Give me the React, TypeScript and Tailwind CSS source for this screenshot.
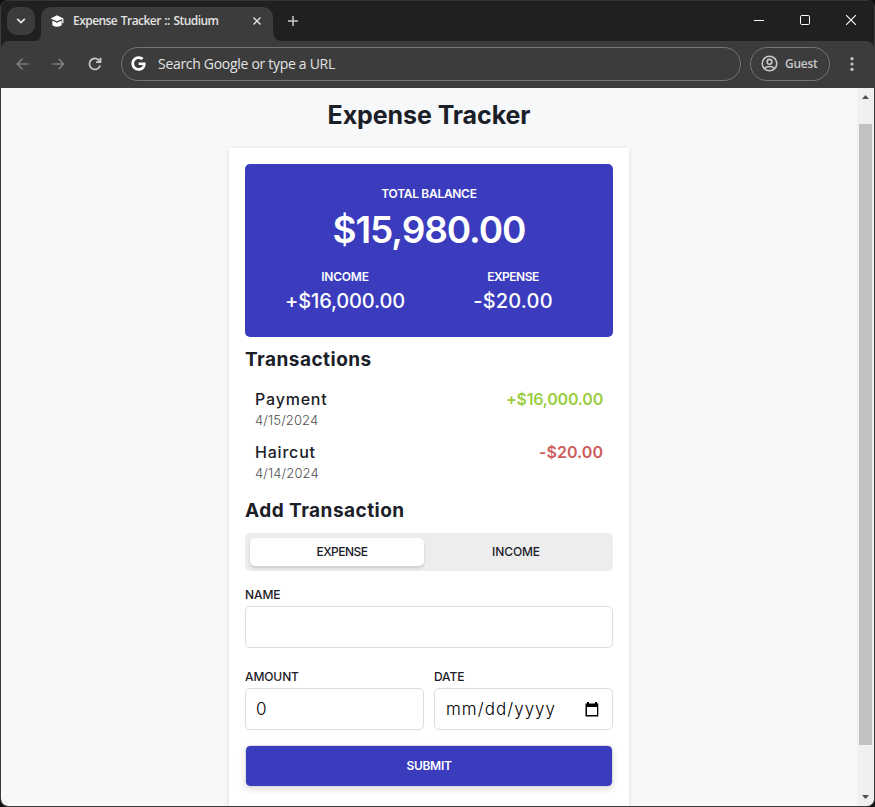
import type { ReactNode } from "react";
import { FaGoogle } from "react-icons/fa";

function TitleBar() {
  return (
    <div className="flex h-[41px] shrink-0 items-start border-t border-[#343635] bg-[#1f2120] pt-[6px]">
      <div className="ml-[6px] flex h-7 w-7 items-center justify-center rounded-[10px] bg-[#3c3c3c]">
        <svg width="10" height="8" viewBox="0 0 10 8" fill="none" stroke="#e3e3e3" strokeWidth="1.8">
          <path d="M1.2 1.8 5 5.6 8.8 1.8" />
        </svg>
      </div>
      <svg className="mt-[24px] shrink-0" width="6" height="10" viewBox="0 0 6 10">
        <path d="M0 10Q6 10 6 2V10Z" fill="#3c3c3c" />
      </svg>
      <div className="flex h-[34px] w-[232px] items-center rounded-t-[10px] bg-[#3c3c3c] pb-[6px]">
        <svg className="ml-[9px]" width="14" height="14" viewBox="0 0 24 24" fill="#fff">
          <path d="M12 2 1 7.500 12 12.500l9-4V16h2V7.500Z" />
          <path d="M4 11v7.500c0 1.500 3.500 3.500 8 3.500s8-2 8-3.500V11l-8 4Z" />
        </svg>
        <span className="ml-[9px] text-[12px] font-semibold tracking-[-0.55px] [word-spacing:1px] whitespace-nowrap text-[#e3e3e3]">
          Expense Tracker :: Studium
        </span>
        <svg className="mr-[12px] ml-auto" width="8" height="8" viewBox="0 0 8 8" stroke="#e3e3e3" strokeWidth="1.4">
          <path d="M.5.5 7.500 7.500M7.500.5.5 7.500" />
        </svg>
      </div>
      <svg className="mt-[24px] shrink-0" width="10" height="10" viewBox="0 0 10 10">
        <path d="M0 0Q0 10 10 10H0Z" fill="#3c3c3c" />
      </svg>
      <svg className="mt-[9px] ml-[5px]" width="10" height="10" viewBox="0 0 10 10" stroke="#c7c7c7" strokeWidth="1.5">
        <path d="M5 0V10M0 5H10" />
      </svg>
      <div className="mr-[18px] ml-auto flex h-[26px] items-center gap-9">
        <svg width="10" height="10" viewBox="0 0 10 10" stroke="#fff">
          <path d="M0 5.500H10" />
        </svg>
        <svg width="10" height="10" viewBox="0 0 10 10" stroke="#fff" fill="none">
          <rect x=".5" y=".5" width="9" height="9" rx="1.200" />
        </svg>
        <svg width="10" height="10" viewBox="0 0 10 10" stroke="#fff" strokeWidth="1.1">
          <path d="M0 0 10 10M10 0 0 10" />
        </svg>
      </div>
    </div>
  );
}

function Toolbar() {
  return (
    <div className="shrink-0 bg-[#1f2120]">
      <div className="flex h-[47px] items-center rounded-t-[8px] bg-[#3c3c3c] pb-[2px]">
        <svg className="ml-[15px]" width="13" height="12" viewBox="0 0 13 12" fill="none" stroke="#7c7c7c" strokeWidth="1.600">
          <path d="M12.500 6H1.500M6.500.8 1.300 6l5.200 5.200" />
        </svg>
        <svg className="ml-[23px]" width="13" height="12" viewBox="0 0 13 12" fill="none" stroke="#7c7c7c" strokeWidth="1.600">
          <path d="M.5 6h11M6.500.8 11.700 6l-5.200 5.200" />
        </svg>
        <svg className="ml-[22px]" width="16" height="16" viewBox="0 0 16 16" fill="none" stroke="#c7c7c7" strokeWidth="1.800">
          <path d="M13.200 9.500A5.500 5.500 0 1 1 12.300 4.600L13.400 6" />
          <path d="M13.500 1.800V6.200H9" />
        </svg>
        <div className="ml-[18px] flex h-[34px] w-[620px] items-center rounded-full border border-[#757575]">
          <FaGoogle className="ml-[9px] text-white" size={15} />
          <span className="ml-[12px] text-[14px] tracking-[-0.3px] whitespace-nowrap text-[#e3e3e3]">
            Search Google or type a URL
          </span>
        </div>
        <div className="ml-[9px] flex h-[34px] w-[80px] items-center rounded-full border border-[#757575]">
          <svg className="ml-[10px]" width="17" height="17" viewBox="0 0 17 17" fill="none" stroke="#c7c7c7" strokeWidth="1.600">
            <circle cx="8.500" cy="8.500" r="7.300" />
            <circle cx="8.500" cy="6.800" r="2.400" />
            <path d="M3.500 13.500C5.500 10.900 11.500 10.900 13.500 13.500" />
          </svg>
          <span className="ml-[7px] text-[12px] font-semibold tracking-[-0.25px] text-[#c7c7c7]">Guest</span>
        </div>
        <svg className="ml-[20px]" width="4" height="14" viewBox="0 0 4 14" fill="#c7c7c7">
          <circle cx="2" cy="1.700" r="1.600" />
          <circle cx="2" cy="7" r="1.600" />
          <circle cx="2" cy="12.300" r="1.600" />
        </svg>
      </div>
    </div>
  );
}

function ScrollBar() {
  return (
    <div className="flex w-[17px] shrink-0 flex-col items-center bg-[#f0f0f0]">
      <svg className="mt-[7px] shrink-0" width="7" height="4" viewBox="0 0 7 4" fill="#505050">
        <path d="M0 4 3.500 0 7 4Z" />
      </svg>
      <div className="mt-[25px] h-[621px] w-[13px] shrink-0 bg-[#c1c1c1]" />
      <svg className="mt-auto mb-[7px] shrink-0" width="7" height="4" viewBox="0 0 7 4" fill="#505050">
        <path d="M0 0 3.500 4 7 0Z" />
      </svg>
    </div>
  );
}

function BalanceCard() {
  return (
    <div className="flex h-[173px] flex-col items-center rounded-[5px] bg-[#3a3cbd] px-4 pt-5 text-white">
      <div className="text-[12px] leading-[20px] font-semibold tracking-[-0.3px]">TOTAL BALANCE</div>
      <div className="text-[37px] leading-[52px] font-semibold tracking-[-1.1px]">$15,980.00</div>
      <div className="mt-[11px] grid w-full grid-cols-2 text-center">
        <div>
          <div className="text-[12px] leading-[20px] font-semibold tracking-[-0.2px]">INCOME</div>
          <div className="text-[20px] leading-[28px] font-medium tracking-[-0.15px]">+$16,000.00</div>
        </div>
        <div>
          <div className="text-[12px] leading-[20px] font-semibold tracking-[-0.5px]">EXPENSE</div>
          <div className="text-[20px] leading-[28px] font-medium tracking-[0.2px]">-$20.00</div>
        </div>
      </div>
    </div>
  );
}

function Transaction({ name, date, children }: { name: string; date: string; children: ReactNode }) {
  return (
    <div className="flex h-[53px] justify-between px-[10px]">
      <div>
        <div className="text-[16px] leading-[24px] font-medium tracking-[0.8px]">{name}</div>
        <div className="text-[13px] leading-[19px] font-light tracking-[0.15px] text-[#505050]">{date}</div>
      </div>
      {children}
    </div>
  );
}

function Label({ children }: { children: ReactNode }) {
  return <div className="text-[12px] leading-[22px] font-medium tracking-[-0.1px]">{children}</div>;
}

const field = "flex h-[42px] items-center rounded-[5px] border border-[#dddddd] px-[10px] pt-[2px] text-[17px] font-light text-black";

export default function App() {
  return (
    <div className="h-[807px] w-[875px] overflow-hidden bg-[#101010] font-['Open_Sans','Noto_Sans',sans-serif]">
      <div className="flex h-[807px] w-[875px] flex-col overflow-hidden rounded-[8px] border-x border-b border-[#3c3c3c] bg-[#3c3c3c]">
        <TitleBar />
        <Toolbar />
        <div className="flex min-h-0 grow overflow-hidden rounded-b-[7px] bg-[#f7f8fa] font-['Inter','Open_Sans',sans-serif] text-[#1b2028]">
          <main className="flex min-w-0 grow flex-col items-center">
            <h1 className="mt-[7px] h-[53px] text-[25px] leading-[40px] font-bold tracking-[-0.08px]">Expense Tracker</h1>
            <section className="w-[400px] grow bg-white px-4 pt-4 shadow-[0_1px_5px_rgba(0,0,0,0.12)]">
              <BalanceCard />
              <h2 className="mt-[9px] text-[19px] leading-[28px] font-bold tracking-[0.47px]">Transactions</h2>
              <div className="mt-[13px]">
                <Transaction name="Payment" date="4/15/2024">
                  <div className="text-[16px] leading-[24px] font-semibold tracking-[-0.2px] text-[#9acd40]">+$16,000.00</div>
                </Transaction>
                <Transaction name="Haircut" date="4/14/2024">
                  <div className="text-[16px] leading-[24px] font-semibold tracking-[0.05px] text-[#cd5c5c]">-$20.00</div>
                </Transaction>
              </div>
              <h2 className="mt-[4px] text-[19px] leading-[28px] font-bold tracking-[0.47px]">Add Transaction</h2>
              <div className="mt-[8px] grid h-[38px] grid-cols-2 gap-[10px] rounded-[5px] bg-[#ededed] p-[5px] text-[12px] leading-[28px] font-medium">
                <div className="rounded-[5px] bg-white pl-[10px] text-center tracking-[-0.5px] shadow-[0_2px_3px_rgba(0,0,0,0.15)]">EXPENSE</div>
                <div className="pr-[10px] text-center tracking-[-0.1px]">INCOME</div>
              </div>
              <div className="mt-[13px]">
                <Label>NAME</Label>
                <div className={field} />
              </div>
              <div className="mt-[18px] grid grid-cols-2 gap-[10px]">
                <div>
                  <Label>AMOUNT</Label>
                  <div className={field}>0</div>
                </div>
                <div>
                  <Label>DATE</Label>
                  <div className={field}>
                    <span className="ml-px tracking-[1.03px]">mm/dd/yyyy</span>
                    <svg className="mr-[3px] mb-[2px] ml-auto" width="14" height="15" viewBox="0 0 14 15">
                      <path d="M2 0h2v1.500h6V0h2v1.500h1.300V14.500H.5V1.500H2ZM2 5v8h10V5Z" fill="#000" fillRule="evenodd" />
                    </svg>
                  </div>
                </div>
              </div>
              <div className="mt-[15px] flex h-[42px] items-center justify-center rounded-[5px] border border-[#dddddd] bg-[#3a3cbd] bg-clip-padding text-[12px] font-semibold tracking-[-0.3px] text-white shadow-[0_3px_6px_rgba(0,0,0,0.12)]">
                SUBMIT
              </div>
            </section>
          </main>
          <ScrollBar />
        </div>
      </div>
    </div>
  );
}
